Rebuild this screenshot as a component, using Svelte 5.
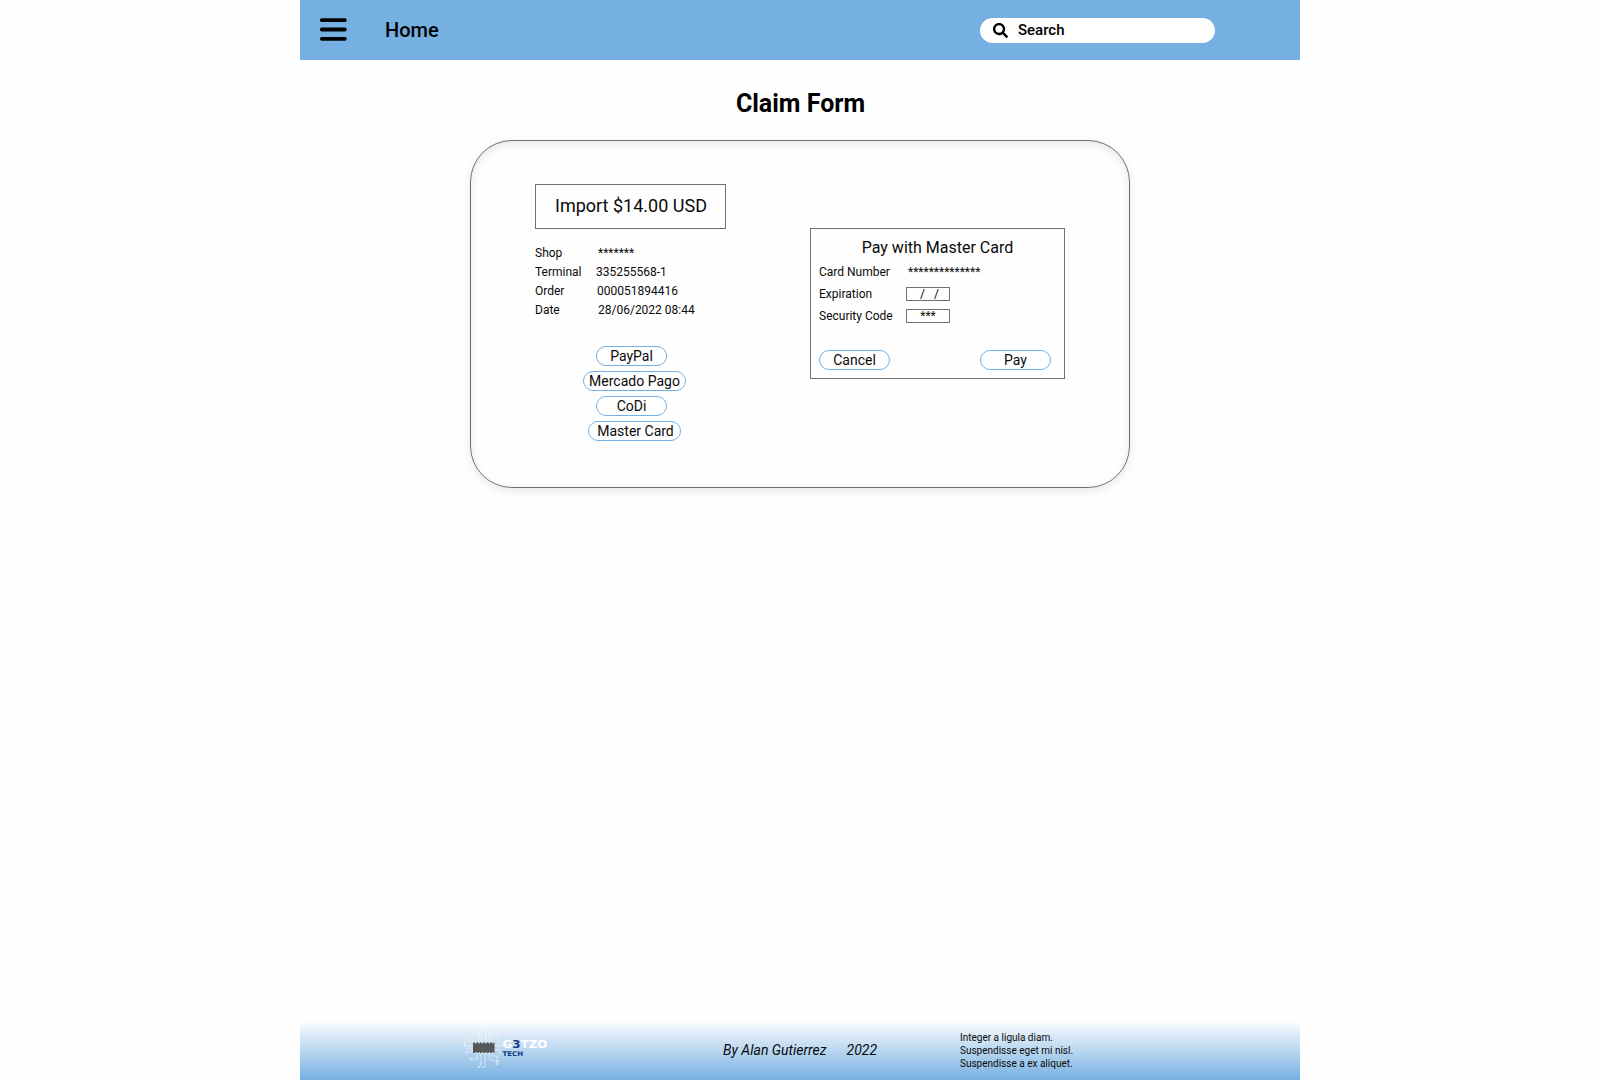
<script>
  const details = [
    { label: 'Shop', value: '*******' },
    { label: 'Terminal', value: '335255568-1' },
    { label: 'Order', value: '000051894416' },
    { label: 'Date', value: '28/06/2022 08:44' }
  ];
  const methods = [
    { name: 'PayPal', size: 'regular' },
    { name: 'Mercado Pago', size: 'widest' },
    { name: 'CoDi', size: 'regular' },
    { name: 'Master Card', size: 'wide' }
  ];
</script>

<div class="page">
  <header>
    <svg class="menu" width="27" height="23" viewBox="0 0 27 23" aria-label="Menu">
      <rect y="0.3" width="26.6" height="3.8" rx="1.7" />
      <rect y="9.6" width="26.6" height="3.8" rx="1.7" />
      <rect y="19" width="26.6" height="3.8" rx="1.7" />
    </svg>
    <a class="home" href="#home">Home</a>
    <div class="search">
      <svg width="15" height="15" viewBox="0 0 512 512" aria-hidden="true">
        <path d="M505 442.7L405.3 343c-4.500-4.500-10.600-7-17-7H372c27.600-35.300 44-79.700 44-128C416 93.100 322.900 0 208 0S0 93.100 0 208s93.100 208 208 208c48.300 0 92.700-16.400 128-44v16.300c0 6.400 2.500 12.500 7 17l99.700 99.700c9.400 9.400 24.600 9.400 33.900 0l28.300-28.300c9.400-9.400 9.400-24.600.1-34zM208 336c-70.700 0-128-57.200-128-128 0-70.700 57.200-128 128-128 70.700 0 128 57.200 128 128 0 70.700-57.200 128-128 128z" />
      </svg>
      <span>Search</span>
    </div>
  </header>

  <main>
    <h1>Claim Form</h1>
    <section class="card">
      <div class="order">
        <div class="amount">Import $14.00 USD</div>
        <dl>
          {#each details as d}
            <div class="row"><dt>{d.label}</dt><dd>{d.value}</dd></div>
          {/each}
        </dl>
        <div class="methods">
          {#each methods as m}
            <button class={m.size}>{m.name}</button>
          {/each}
        </div>
      </div>

      <div class="payment">
        <h2>Pay with Master Card</h2>
        <div class="field"><span class="label">Card Number</span><span class="number">**************</span></div>
        <div class="field"><span class="label">Expiration</span><span class="box date">/ &nbsp; /</span></div>
        <div class="field"><span class="label">Security Code</span><span class="box code">***</span></div>
        <div class="actions">
          <button class="regular">Cancel</button>
          <button class="regular">Pay</button>
        </div>
      </div>
    </section>
  </main>

  <footer>
    <svg class="logo" width="90" height="44" viewBox="460 1025 90 44" aria-label="G3TZO Tech">
      <g class="traces">
        <path d="M478.500 1042V1031M481.500 1042V1036L477 1034M485.500 1042V1026M489 1042V1030M492 1042V1035H498M492.500 1030L493 1027M474 1046H464.500V1041M474 1049H465.500M474 1052H466V1055M474 1043V1040H468M494 1046H502M494 1050H500V1055" />
        <path d="M477.500 1053V1059H470M481 1053V1064M485 1053V1067H478M489 1053V1058L493 1061H498M492 1053V1056H497V1064" />
      </g>
      <g class="nodes">
        <circle cx="485.500" cy="1027" r="0.8" /><circle cx="498" cy="1035" r="0.8" /><circle cx="468" cy="1040" r="0.8" />
        <circle cx="461.500" cy="1041" r="0.8" /><circle cx="470.500" cy="1059" r="0.8" /><circle cx="480.500" cy="1064" r="0.8" />
        <circle cx="478.500" cy="1067" r="0.8" /><circle cx="497" cy="1064" r="0.8" /><circle cx="498" cy="1061" r="0.8" />
      </g>
      <rect class="chip" x="473" y="1042.500" width="21.500" height="10.500" />
      <path class="pins" d="M475.200 1042.500H494M475.200 1053H494" />
      <text class="brand" x="502.500" y="1048" textLength="45" lengthAdjust="spacingAndGlyphs">G<tspan class="navy">3</tspan>TZO</text>
      <text class="tech navy" x="502.500" y="1056" textLength="20.500" lengthAdjust="spacingAndGlyphs">TECH</text>
    </svg>
    <div class="credit"><span>By Alan Gutierrez</span><span>2022</span></div>
    <p>Integer a ligula diam.<br />Suspendisse eget mi nisl.<br />Suspendisse a ex aliquet.</p>
  </footer>
</div>

<style>
  :global(body) { background: #fefefe; }
  .page {
    box-sizing: border-box;
    width: 1000px;
    height: 1080px;
    margin: 0 auto;
    display: flex;
    flex-direction: column;
    font-family: Roboto, sans-serif;
    color: #0a0a0a;
    background: #fefefe;
  }
  header {
    height: 60px;
    flex: none;
    display: flex;
    align-items: center;
    color: #000;
    background: #76b0e2;
  }
  .menu { margin: 0 0 1px 20px; }
  .home {
    margin-left: 38px;
    font-size: 20px;
    font-weight: 500;
    color: #000;
    text-decoration: none;
  }
  .search {
    box-sizing: border-box;
    width: 235px;
    height: 25px;
    margin: 1px 85px 0 auto;
    padding: 0 0 1px 13px;
    display: flex;
    align-items: center;
    gap: 10px;
    border-radius: 13px;
    background: #fff;
    font-size: 15px;
    line-height: 18px;
    font-weight: 500;
  }
  main {
    flex: 1;
    display: flex;
    flex-direction: column;
    align-items: center;
  }
  h1 {
    margin: 29px 0 0;
    padding-left: 1px;
    font-size: 25px;
    line-height: 30px;
    font-weight: 700;
    color: #000;
  }
  .card {
    box-sizing: border-box;
    width: 660px;
    height: 348px;
    margin-top: 21px;
    padding: 43px 64px 0;
    display: flex;
    align-items: flex-start;
    justify-content: space-between;
    border: 1px solid #707070;
    border-radius: 42px;
    box-shadow: 0 3px 8px #00000018, inset 0 3px 8px #00000018;
  }
  .amount {
    box-sizing: border-box;
    width: 191px;
    height: 45px;
    padding-left: 1px;
    border: 1px solid #707070;
    font-size: 18px;
    line-height: 41px;
    text-align: center;
  }
  dl { margin: 15px 0 0; font-size: 12px; line-height: 19px; }
  .row { display: flex; }
  dt { width: 61px; }
  dd { margin: 0; }
  .row:nth-child(1) dd, .row:nth-child(4) dd { padding-left: 2px; }
  .row:nth-child(3) dd { padding-left: 1px; }
  .methods {
    width: 193px;
    margin-top: 26px;
    display: flex;
    flex-direction: column;
    align-items: center;
    gap: 5px;
  }
  button {
    box-sizing: border-box;
    height: 20px;
    padding: 0;
    border: 1px solid #76b0e2;
    border-radius: 10px;
    background: #fff;
    color: #0a0a0a;
    font: 400 14px/18px Roboto, sans-serif;
    text-align: center;
  }
  .regular { width: 71px; }
  .widest { width: 103px; margin-left: 6px; }
  .wide { width: 93px; margin-left: 6px; padding-left: 2px; }
  .payment {
    box-sizing: border-box;
    width: 255px;
    height: 151px;
    margin-top: 44px;
    padding: 8px 13px 8px 8px;
    border: 1px solid #707070;
  }
  h2 {
    margin: 0 0 2px;
    padding-left: 5px;
    font-size: 16px;
    line-height: 22px;
    font-weight: 400;
    text-align: center;
  }
  .field { height: 22px; display: flex; align-items: center; font-size: 12px; }
  .label { width: 87px; }
  .number { padding-left: 2px; }
  .box {
    box-sizing: border-box;
    width: 44px;
    height: 14px;
    border: 1px solid #707070;
    line-height: 13px;
    text-align: center;
  }
  .date { padding-left: 3px; }
  .code { line-height: 12px; }
  .actions { margin-top: 23px; display: flex; justify-content: space-between; }
  footer {
    height: 60px;
    flex: none;
    display: flex;
    align-items: flex-start;
    background: linear-gradient(#fefefe, #76b0e2);
  }
  .logo { flex: none; margin: 5px 0 0 160px; }
  .traces { fill: none; stroke: #fff; stroke-width: 0.8; opacity: 0.65; }
  .nodes { fill: #fff; }
  .chip { fill: #575757; }
  .pins { fill: none; stroke: #dbe8f4; stroke-width: 2; stroke-dasharray: 1.2 2.200; }
  .brand { font: 700 10.5px "DejaVu Sans", sans-serif; fill: #fff; }
  .tech { font: 700 6.5px "DejaVu Sans", sans-serif; }
  .brand .navy, .tech.navy { fill: #17387f; }
  .credit {
    width: 237px;
    margin: 21px 0 0 173px;
    display: flex;
    gap: 20px;
    font-size: 14px;
    line-height: 18px;
    font-style: italic;
  }
  p { margin: 11px 0 0; font-size: 10px; line-height: 13px; }
</style>
